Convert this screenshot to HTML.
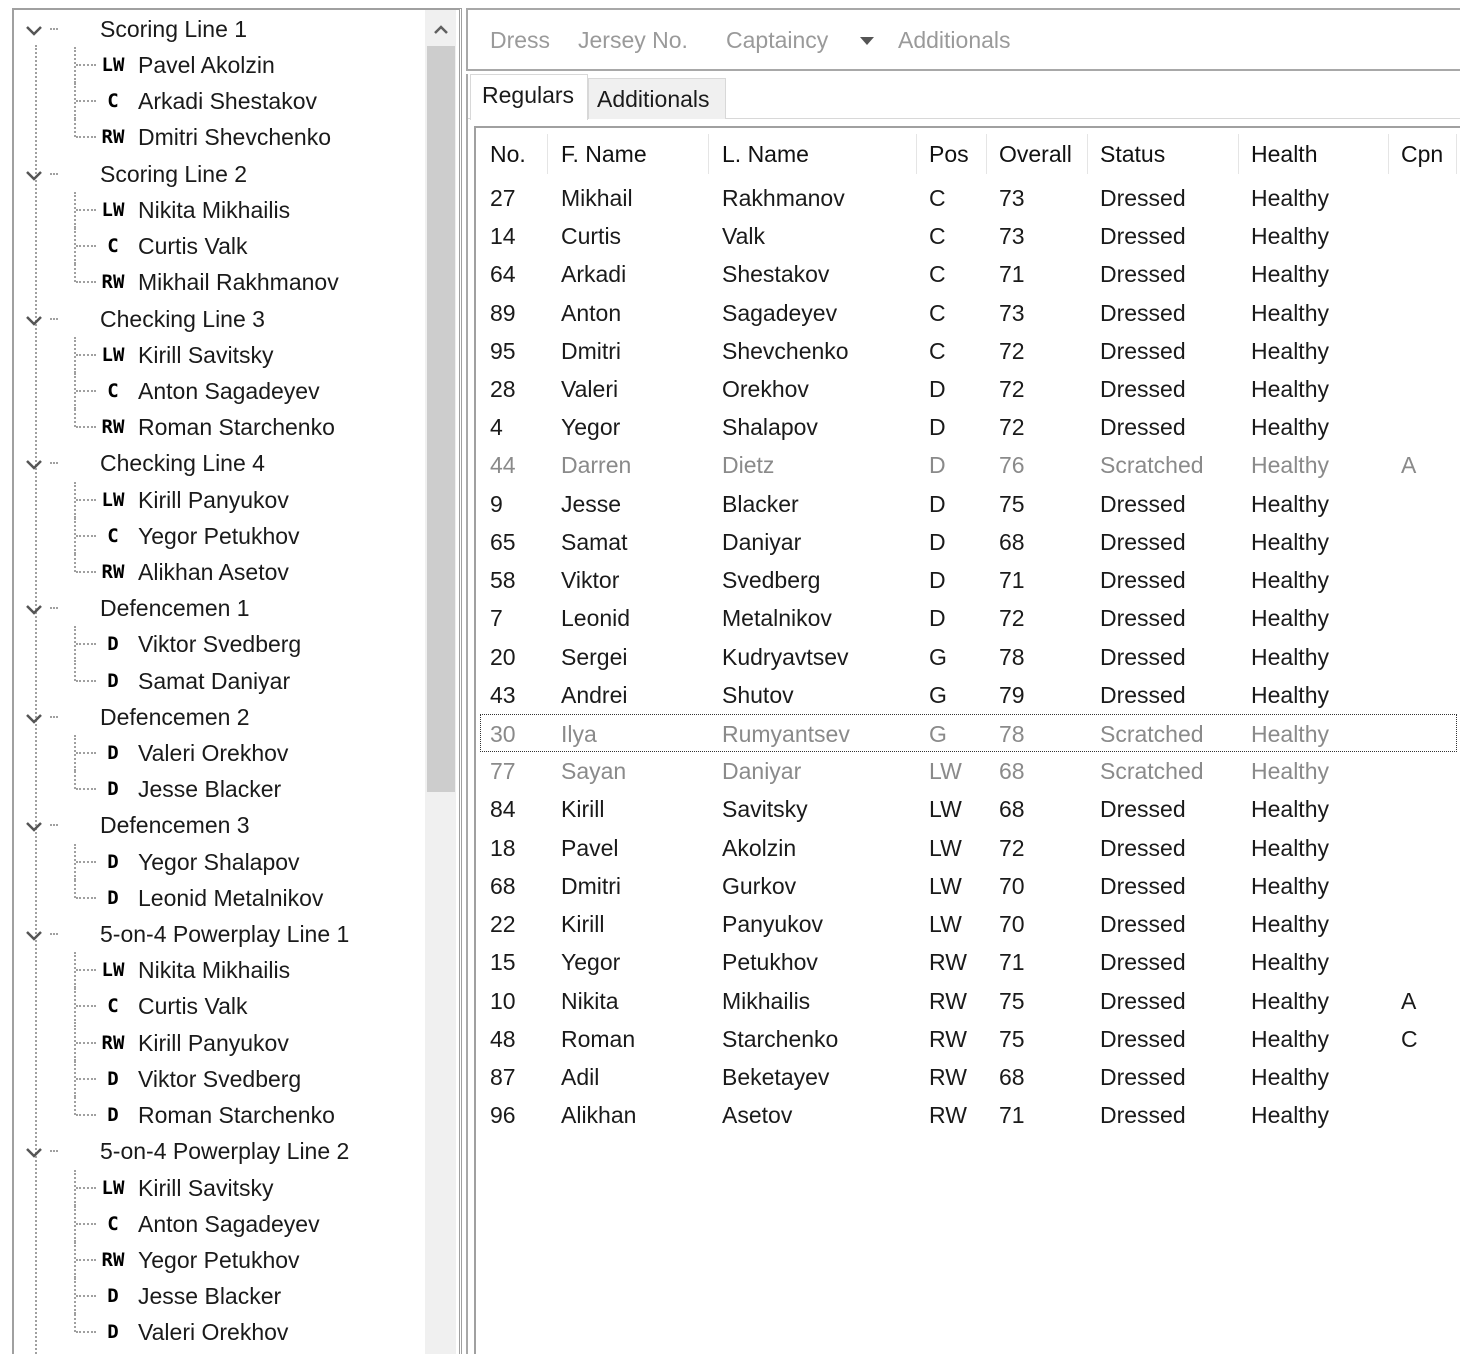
<!DOCTYPE html>
<html><head><meta charset="utf-8"><style>
*{margin:0;padding:0;box-sizing:border-box}
html,body{width:1460px;height:1354px;overflow:hidden}
body{background:#fff;position:relative;font-family:"Liberation Sans",sans-serif;font-size:23px;color:#1a1a1a}
.a{position:absolute;white-space:nowrap}
.tr{position:absolute;left:0;height:36px;line-height:36px;width:425px}
.chev{position:absolute;left:25px;top:13px;width:18px;height:12px}
.gt{position:absolute;left:100px}
.vl{position:absolute;left:74px;top:0;height:36px;border-left:2px dotted #a0a0a0}
.vl.h{height:18px}
.hl{position:absolute;left:76px;top:17px;width:20px;border-top:2px dotted #a0a0a0}
.gd{position:absolute;left:50px;top:17px;width:8px;border-top:2px dotted #a0a0a0}
.p{position:absolute;left:94px;width:38px;text-align:center;font-family:"DejaVu Sans Mono","Liberation Mono",monospace;font-weight:bold;font-size:19px;color:#000}
.nm{position:absolute;left:138px}
.row{position:absolute;left:476px;width:982px;height:38px;line-height:38px}
.row span{position:absolute}
.c0{left:14px}.c1{left:85px}.c2{left:246px}.c3{left:453px}.c4{left:523px}.c5{left:624px}.c6{left:775px}.c7{left:925px}
.g{color:#8a8a8a}
.sep{position:absolute;top:134px;height:40px;border-left:1px solid #e5e5e5}
</style></head><body>
<div class="a" style="left:12px;top:8px;width:450px;height:1346px;border:2px solid #a0a0a0;border-right:3px double #a0a0a0;border-bottom:none"></div>
<div class="a" style="left:425px;top:10px;width:31px;height:1344px;background:#f0f0f0"></div>
<div class="a" style="left:427px;top:46px;width:28px;height:746px;background:#cdcdcd"></div>
<svg class="a" style="left:432px;top:22px" width="18" height="14"><path d="M3 11 L9 5 L15 11" fill="none" stroke="#606060" stroke-width="2.5"/></svg>
<div class="a" style="left:35px;top:45px;height:1309px;border-left:2px dotted #a0a0a0"></div>
<div class="tr" style="top:11px"><svg class="chev" viewBox="0 0 18 12"><path d="M2 3 L9 10 L16 3" fill="none" stroke="#555" stroke-width="2.5"/></svg><div class="gd"></div><span class="gt">Scoring Line 1</span></div>
<div class="tr" style="top:47px"><div class="vl"></div><div class="hl"></div><span class="p">LW</span><span class="nm">Pavel Akolzin</span></div>
<div class="tr" style="top:83px"><div class="vl"></div><div class="hl"></div><span class="p">C</span><span class="nm">Arkadi Shestakov</span></div>
<div class="tr" style="top:119px"><div class="vl h"></div><div class="hl"></div><span class="p">RW</span><span class="nm">Dmitri Shevchenko</span></div>
<div class="tr" style="top:156px"><svg class="chev" viewBox="0 0 18 12"><path d="M2 3 L9 10 L16 3" fill="none" stroke="#555" stroke-width="2.5"/></svg><div class="gd"></div><span class="gt">Scoring Line 2</span></div>
<div class="tr" style="top:192px"><div class="vl"></div><div class="hl"></div><span class="p">LW</span><span class="nm">Nikita Mikhailis</span></div>
<div class="tr" style="top:228px"><div class="vl"></div><div class="hl"></div><span class="p">C</span><span class="nm">Curtis Valk</span></div>
<div class="tr" style="top:264px"><div class="vl h"></div><div class="hl"></div><span class="p">RW</span><span class="nm">Mikhail Rakhmanov</span></div>
<div class="tr" style="top:301px"><svg class="chev" viewBox="0 0 18 12"><path d="M2 3 L9 10 L16 3" fill="none" stroke="#555" stroke-width="2.5"/></svg><div class="gd"></div><span class="gt">Checking Line 3</span></div>
<div class="tr" style="top:337px"><div class="vl"></div><div class="hl"></div><span class="p">LW</span><span class="nm">Kirill Savitsky</span></div>
<div class="tr" style="top:373px"><div class="vl"></div><div class="hl"></div><span class="p">C</span><span class="nm">Anton Sagadeyev</span></div>
<div class="tr" style="top:409px"><div class="vl h"></div><div class="hl"></div><span class="p">RW</span><span class="nm">Roman Starchenko</span></div>
<div class="tr" style="top:445px"><svg class="chev" viewBox="0 0 18 12"><path d="M2 3 L9 10 L16 3" fill="none" stroke="#555" stroke-width="2.5"/></svg><div class="gd"></div><span class="gt">Checking Line 4</span></div>
<div class="tr" style="top:482px"><div class="vl"></div><div class="hl"></div><span class="p">LW</span><span class="nm">Kirill Panyukov</span></div>
<div class="tr" style="top:518px"><div class="vl"></div><div class="hl"></div><span class="p">C</span><span class="nm">Yegor Petukhov</span></div>
<div class="tr" style="top:554px"><div class="vl h"></div><div class="hl"></div><span class="p">RW</span><span class="nm">Alikhan Asetov</span></div>
<div class="tr" style="top:590px"><svg class="chev" viewBox="0 0 18 12"><path d="M2 3 L9 10 L16 3" fill="none" stroke="#555" stroke-width="2.5"/></svg><div class="gd"></div><span class="gt">Defencemen 1</span></div>
<div class="tr" style="top:626px"><div class="vl"></div><div class="hl"></div><span class="p">D</span><span class="nm">Viktor Svedberg</span></div>
<div class="tr" style="top:663px"><div class="vl h"></div><div class="hl"></div><span class="p">D</span><span class="nm">Samat Daniyar</span></div>
<div class="tr" style="top:699px"><svg class="chev" viewBox="0 0 18 12"><path d="M2 3 L9 10 L16 3" fill="none" stroke="#555" stroke-width="2.5"/></svg><div class="gd"></div><span class="gt">Defencemen 2</span></div>
<div class="tr" style="top:735px"><div class="vl"></div><div class="hl"></div><span class="p">D</span><span class="nm">Valeri Orekhov</span></div>
<div class="tr" style="top:771px"><div class="vl h"></div><div class="hl"></div><span class="p">D</span><span class="nm">Jesse Blacker</span></div>
<div class="tr" style="top:807px"><svg class="chev" viewBox="0 0 18 12"><path d="M2 3 L9 10 L16 3" fill="none" stroke="#555" stroke-width="2.5"/></svg><div class="gd"></div><span class="gt">Defencemen 3</span></div>
<div class="tr" style="top:844px"><div class="vl"></div><div class="hl"></div><span class="p">D</span><span class="nm">Yegor Shalapov</span></div>
<div class="tr" style="top:880px"><div class="vl h"></div><div class="hl"></div><span class="p">D</span><span class="nm">Leonid Metalnikov</span></div>
<div class="tr" style="top:916px"><svg class="chev" viewBox="0 0 18 12"><path d="M2 3 L9 10 L16 3" fill="none" stroke="#555" stroke-width="2.5"/></svg><div class="gd"></div><span class="gt">5-on-4 Powerplay Line 1</span></div>
<div class="tr" style="top:952px"><div class="vl"></div><div class="hl"></div><span class="p">LW</span><span class="nm">Nikita Mikhailis</span></div>
<div class="tr" style="top:988px"><div class="vl"></div><div class="hl"></div><span class="p">C</span><span class="nm">Curtis Valk</span></div>
<div class="tr" style="top:1025px"><div class="vl"></div><div class="hl"></div><span class="p">RW</span><span class="nm">Kirill Panyukov</span></div>
<div class="tr" style="top:1061px"><div class="vl"></div><div class="hl"></div><span class="p">D</span><span class="nm">Viktor Svedberg</span></div>
<div class="tr" style="top:1097px"><div class="vl h"></div><div class="hl"></div><span class="p">D</span><span class="nm">Roman Starchenko</span></div>
<div class="tr" style="top:1133px"><svg class="chev" viewBox="0 0 18 12"><path d="M2 3 L9 10 L16 3" fill="none" stroke="#555" stroke-width="2.5"/></svg><div class="gd"></div><span class="gt">5-on-4 Powerplay Line 2</span></div>
<div class="tr" style="top:1170px"><div class="vl"></div><div class="hl"></div><span class="p">LW</span><span class="nm">Kirill Savitsky</span></div>
<div class="tr" style="top:1206px"><div class="vl"></div><div class="hl"></div><span class="p">C</span><span class="nm">Anton Sagadeyev</span></div>
<div class="tr" style="top:1242px"><div class="vl"></div><div class="hl"></div><span class="p">RW</span><span class="nm">Yegor Petukhov</span></div>
<div class="tr" style="top:1278px"><div class="vl"></div><div class="hl"></div><span class="p">D</span><span class="nm">Jesse Blacker</span></div>
<div class="tr" style="top:1314px;height:36px"><div class="vl h"></div><div class="hl"></div><span class="p">D</span><span class="nm">Valeri Orekhov</span></div>

<div class="a" style="left:466px;top:8px;width:994px;height:63px;border:2px solid #a8a8a8;border-right:none"></div>
<div class="a" style="left:490px;top:27px;color:#9a9a9a">Dress</div>
<div class="a" style="left:578px;top:27px;color:#9a9a9a">Jersey No.</div>
<div class="a" style="left:726px;top:27px;color:#9a9a9a">Captaincy</div>
<svg class="a" style="left:859px;top:36px" width="16" height="10"><path d="M1 1 L15 1 L8 9 Z" fill="#555"/></svg>
<div class="a" style="left:898px;top:27px;color:#9a9a9a">Additionals</div>
<div class="a" style="left:466px;top:74px;width:2px;height:1280px;background:#a8a8a8"></div>
<div class="a" style="left:468px;top:118px;width:992px;height:1px;background:#d8d8d8"></div>
<div class="a" style="left:470px;top:74px;width:118px;height:46px;background:#fff;border:1px solid #d8d8d8;border-bottom:none"></div>
<div class="a" style="left:482px;top:82px">Regulars</div>
<div class="a" style="left:588px;top:78px;width:138px;height:41px;background:#f0f0f0;border:1px solid #d8d8d8;border-bottom:none"></div>
<div class="a" style="left:597px;top:86px">Additionals</div>
<div class="a" style="left:474px;top:126px;width:986px;height:1228px;border-top:2px solid #a0a0a0;border-left:2px solid #a0a0a0"></div>
<div class="sep" style="left:547px"></div><div class="sep" style="left:708px"></div><div class="sep" style="left:916px"></div><div class="sep" style="left:986px"></div><div class="sep" style="left:1087px"></div><div class="sep" style="left:1238px"></div><div class="sep" style="left:1388px"></div><div class="sep" style="left:1456px"></div>
<div class="row" style="top:135px;color:#111"><span class="c0">No.</span><span class="c1">F. Name</span><span class="c2">L. Name</span><span class="c3">Pos</span><span class="c4">Overall</span><span class="c5">Status</span><span class="c6">Health</span><span class="c7">Cpn</span></div>
<div class="row" style="top:179px"><span class="c0">27</span><span class="c1">Mikhail</span><span class="c2">Rakhmanov</span><span class="c3">C</span><span class="c4">73</span><span class="c5">Dressed</span><span class="c6">Healthy</span></div>
<div class="row" style="top:217px"><span class="c0">14</span><span class="c1">Curtis</span><span class="c2">Valk</span><span class="c3">C</span><span class="c4">73</span><span class="c5">Dressed</span><span class="c6">Healthy</span></div>
<div class="row" style="top:255px"><span class="c0">64</span><span class="c1">Arkadi</span><span class="c2">Shestakov</span><span class="c3">C</span><span class="c4">71</span><span class="c5">Dressed</span><span class="c6">Healthy</span></div>
<div class="row" style="top:294px"><span class="c0">89</span><span class="c1">Anton</span><span class="c2">Sagadeyev</span><span class="c3">C</span><span class="c4">73</span><span class="c5">Dressed</span><span class="c6">Healthy</span></div>
<div class="row" style="top:332px"><span class="c0">95</span><span class="c1">Dmitri</span><span class="c2">Shevchenko</span><span class="c3">C</span><span class="c4">72</span><span class="c5">Dressed</span><span class="c6">Healthy</span></div>
<div class="row" style="top:370px"><span class="c0">28</span><span class="c1">Valeri</span><span class="c2">Orekhov</span><span class="c3">D</span><span class="c4">72</span><span class="c5">Dressed</span><span class="c6">Healthy</span></div>
<div class="row" style="top:408px"><span class="c0">4</span><span class="c1">Yegor</span><span class="c2">Shalapov</span><span class="c3">D</span><span class="c4">72</span><span class="c5">Dressed</span><span class="c6">Healthy</span></div>
<div class="row g" style="top:446px"><span class="c0">44</span><span class="c1">Darren</span><span class="c2">Dietz</span><span class="c3">D</span><span class="c4">76</span><span class="c5">Scratched</span><span class="c6">Healthy</span><span class="c7">A</span></div>
<div class="row" style="top:485px"><span class="c0">9</span><span class="c1">Jesse</span><span class="c2">Blacker</span><span class="c3">D</span><span class="c4">75</span><span class="c5">Dressed</span><span class="c6">Healthy</span></div>
<div class="row" style="top:523px"><span class="c0">65</span><span class="c1">Samat</span><span class="c2">Daniyar</span><span class="c3">D</span><span class="c4">68</span><span class="c5">Dressed</span><span class="c6">Healthy</span></div>
<div class="row" style="top:561px"><span class="c0">58</span><span class="c1">Viktor</span><span class="c2">Svedberg</span><span class="c3">D</span><span class="c4">71</span><span class="c5">Dressed</span><span class="c6">Healthy</span></div>
<div class="row" style="top:599px"><span class="c0">7</span><span class="c1">Leonid</span><span class="c2">Metalnikov</span><span class="c3">D</span><span class="c4">72</span><span class="c5">Dressed</span><span class="c6">Healthy</span></div>
<div class="row" style="top:638px"><span class="c0">20</span><span class="c1">Sergei</span><span class="c2">Kudryavtsev</span><span class="c3">G</span><span class="c4">78</span><span class="c5">Dressed</span><span class="c6">Healthy</span></div>
<div class="row" style="top:676px"><span class="c0">43</span><span class="c1">Andrei</span><span class="c2">Shutov</span><span class="c3">G</span><span class="c4">79</span><span class="c5">Dressed</span><span class="c6">Healthy</span></div>
<div class="row g" style="top:714px;left:480px;width:977px;border:1px dotted #333"><span class="c0" style="left:9px">30</span><span class="c1" style="left:80px">Ilya</span><span class="c2" style="left:241px">Rumyantsev</span><span class="c3" style="left:448px">G</span><span class="c4" style="left:518px">78</span><span class="c5" style="left:619px">Scratched</span><span class="c6" style="left:770px">Healthy</span></div>
<div class="row g" style="top:752px"><span class="c0">77</span><span class="c1">Sayan</span><span class="c2">Daniyar</span><span class="c3">LW</span><span class="c4">68</span><span class="c5">Scratched</span><span class="c6">Healthy</span></div>
<div class="row" style="top:790px"><span class="c0">84</span><span class="c1">Kirill</span><span class="c2">Savitsky</span><span class="c3">LW</span><span class="c4">68</span><span class="c5">Dressed</span><span class="c6">Healthy</span></div>
<div class="row" style="top:829px"><span class="c0">18</span><span class="c1">Pavel</span><span class="c2">Akolzin</span><span class="c3">LW</span><span class="c4">72</span><span class="c5">Dressed</span><span class="c6">Healthy</span></div>
<div class="row" style="top:867px"><span class="c0">68</span><span class="c1">Dmitri</span><span class="c2">Gurkov</span><span class="c3">LW</span><span class="c4">70</span><span class="c5">Dressed</span><span class="c6">Healthy</span></div>
<div class="row" style="top:905px"><span class="c0">22</span><span class="c1">Kirill</span><span class="c2">Panyukov</span><span class="c3">LW</span><span class="c4">70</span><span class="c5">Dressed</span><span class="c6">Healthy</span></div>
<div class="row" style="top:943px"><span class="c0">15</span><span class="c1">Yegor</span><span class="c2">Petukhov</span><span class="c3">RW</span><span class="c4">71</span><span class="c5">Dressed</span><span class="c6">Healthy</span></div>
<div class="row" style="top:982px"><span class="c0">10</span><span class="c1">Nikita</span><span class="c2">Mikhailis</span><span class="c3">RW</span><span class="c4">75</span><span class="c5">Dressed</span><span class="c6">Healthy</span><span class="c7">A</span></div>
<div class="row" style="top:1020px"><span class="c0">48</span><span class="c1">Roman</span><span class="c2">Starchenko</span><span class="c3">RW</span><span class="c4">75</span><span class="c5">Dressed</span><span class="c6">Healthy</span><span class="c7">C</span></div>
<div class="row" style="top:1058px"><span class="c0">87</span><span class="c1">Adil</span><span class="c2">Beketayev</span><span class="c3">RW</span><span class="c4">68</span><span class="c5">Dressed</span><span class="c6">Healthy</span></div>
<div class="row" style="top:1096px"><span class="c0">96</span><span class="c1">Alikhan</span><span class="c2">Asetov</span><span class="c3">RW</span><span class="c4">71</span><span class="c5">Dressed</span><span class="c6">Healthy</span></div>
</body></html>
